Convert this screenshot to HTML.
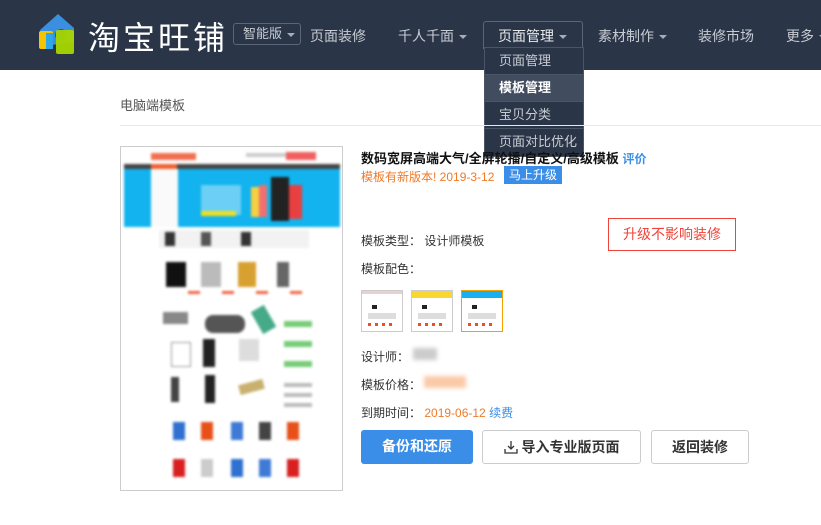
<!DOCTYPE html>
<html><head><meta charset="utf-8"><style>
*{margin:0;padding:0;box-sizing:border-box}
body{width:821px;height:525px;overflow:hidden;background:#fff;font-family:"Liberation Sans","Noto Sans CJK SC",sans-serif;font-size:12px;color:#333;position:relative}
.hd{position:absolute;left:0;top:0;width:821px;height:70px;background:#2a3547}
.a{position:absolute;white-space:nowrap}
.nav{color:#c8ccd3;font-size:14px;top:26px}
.car{display:inline-block;width:0;height:0;border-left:4px solid transparent;border-right:4px solid transparent;border-top:4px solid #aab;vertical-align:middle;margin-left:5px}
.dd{position:absolute;left:484px;top:47px;width:100px;background:#2a3547;border:1px solid #4a5566}
.dd div{height:27px;line-height:26px;padding-left:14px;color:#c8ccd3;font-size:13px;border-bottom:1px solid #4a5566}
.btn{position:absolute;top:430px;height:34px;line-height:32px;text-align:center;font-size:14px;font-weight:bold;border-radius:3px}
.th{filter:blur(1.2px)}
.th div{position:absolute}
.sw{position:absolute;top:290px;width:42px;height:42px;border:1px solid #ccc;background:#fff}
.sw i{position:absolute;display:block;background:#999}
</style></head><body>
<div class="hd"></div>
<svg class="a" style="left:36px;top:12px" width="45" height="43" viewBox="0 0 45 43">
<path d="M4 18 L22 2 L38 16 L38 30 L8 34 Z" fill="#3a8fe0"/>
<rect x="3" y="19" width="14" height="18" rx="2" fill="#f5c400"/>
<rect x="10" y="21" width="7" height="16" fill="#2ea7e8"/>
<circle cx="25" cy="23" r="6" fill="#1e5a9a"/>
<rect x="20" y="18" width="18" height="24" rx="2" fill="#a8d600" opacity=".95"/>
</svg>
<div class="a" style="left:88px;top:13px;font-size:32px;color:#fff;letter-spacing:3px">淘宝旺铺</div>
<div class="a" style="left:233px;top:23px;width:68px;height:22px;border:1px solid #5b6678;border-radius:3px;color:#c8ccd3;font-size:13px;line-height:20px;padding-left:9px">智能版<span class="car"></span></div>
<div class="a nav" style="left:310px">页面装修</div>
<div class="a nav" style="left:398px">千人千面<span class="car"></span></div>
<div class="a" style="left:483px;top:21px;width:100px;height:28px;border:1px solid #5b6678;border-bottom:none;border-radius:3px 3px 0 0"></div>
<div class="a nav" style="left:498px;color:#e8eaee">页面管理<span class="car"></span></div>
<div class="a nav" style="left:598px">素材制作<span class="car"></span></div>
<div class="a nav" style="left:698px">装修市场</div>
<div class="a nav" style="left:786px">更多<span class="car"></span></div>
<div class="dd"><div>页面管理</div><div style="background:#414c5e;color:#fff;font-weight:bold">模板管理</div><div>宝贝分类</div><div style="border:none">页面对比优化</div></div>
<div class="a" style="left:120px;top:95px;font-size:13px;color:#555">电脑端模板</div>
<div class="a" style="left:120px;top:125px;width:701px;height:1px;background:#e8e8e8"></div>
<div class="a" style="left:120px;top:146px;width:223px;height:345px;border:1px solid #ccc;background:#fff"></div>
<div class="a th" style="left:121px;top:147px;width:221px;height:343px">
<div style="left:30px;top:6px;width:45px;height:7px;background:#f07050"></div>
<div style="left:125px;top:6px;width:45px;height:4px;background:#ccc"></div>
<div style="left:165px;top:5px;width:30px;height:8px;background:#f06060"></div>
<div style="left:3px;top:17px;width:216px;height:5px;background:#444"></div>
<div style="left:30px;top:17px;width:26px;height:5px;background:#f06030"></div>
<div style="left:3px;top:22px;width:216px;height:58px;background:#12b3ee"></div>
<div style="left:30px;top:22px;width:27px;height:58px;background:#fafafa"></div>
<div style="left:80px;top:38px;width:40px;height:30px;background:#6ccff5"></div>
<div style="left:80px;top:64px;width:35px;height:5px;background:#f0e020"></div>
<div style="left:130px;top:40px;width:8px;height:30px;background:#f6d040"></div>
<div style="left:138px;top:38px;width:8px;height:32px;background:#f07070"></div>
<div style="left:150px;top:30px;width:18px;height:44px;background:#222"></div>
<div style="left:168px;top:38px;width:13px;height:34px;background:#e84040"></div>
<div style="left:38px;top:83px;width:150px;height:18px;background:#f2f2f2"></div>
<div style="left:44px;top:85px;width:10px;height:14px;background:#333"></div>
<div style="left:80px;top:85px;width:10px;height:14px;background:#555"></div>
<div style="left:120px;top:85px;width:10px;height:14px;background:#333"></div>
<div style="left:45px;top:115px;width:20px;height:25px;background:#111"></div>
<div style="left:80px;top:115px;width:20px;height:25px;background:#bbb"></div>
<div style="left:117px;top:115px;width:18px;height:25px;background:#d8a030"></div>
<div style="left:156px;top:115px;width:12px;height:25px;background:#666"></div>
<div style="left:45px;top:144px;width:140px;height:3px;background:repeating-linear-gradient(90deg,#fff 0 22px,#f06040 22px 34px)"></div>
<div style="left:42px;top:165px;width:25px;height:12px;background:#888"></div>
<div style="left:84px;top:168px;width:40px;height:18px;background:#555;border-radius:8px"></div>
<div style="left:135px;top:160px;width:15px;height:25px;background:#4a8;transform:rotate(-30deg)"></div>
<div style="left:163px;top:168px;width:28px;height:60px;background:repeating-linear-gradient(180deg,#fff 0 6px,#7c7 6px 12px,#fff 12px 20px)"></div>
<div style="left:50px;top:195px;width:20px;height:25px;border:1px solid #999"></div>
<div style="left:82px;top:192px;width:12px;height:28px;background:#222"></div>
<div style="left:118px;top:192px;width:20px;height:22px;background:#ddd"></div>
<div style="left:50px;top:230px;width:8px;height:25px;background:#444"></div>
<div style="left:84px;top:228px;width:10px;height:28px;background:#222"></div>
<div style="left:118px;top:235px;width:25px;height:10px;background:#c9b070;transform:rotate(-15deg)"></div>
<div style="left:163px;top:230px;width:28px;height:30px;background:repeating-linear-gradient(180deg,#fff 0 6px,#bbb 6px 10px)"></div>
<div style="left:52px;top:275px;width:12px;height:18px;background:#3070d0"></div>
<div style="left:80px;top:275px;width:12px;height:18px;background:#e8501a"></div>
<div style="left:110px;top:275px;width:12px;height:18px;background:#3f7ad6"></div>
<div style="left:138px;top:275px;width:12px;height:18px;background:#444"></div>
<div style="left:166px;top:275px;width:12px;height:18px;background:#e8501a"></div>
<div style="left:52px;top:312px;width:12px;height:18px;background:#d82020"></div>
<div style="left:80px;top:312px;width:12px;height:18px;background:#ccc"></div>
<div style="left:110px;top:312px;width:12px;height:18px;background:#3070d0"></div>
<div style="left:138px;top:312px;width:12px;height:18px;background:#3f7ad6"></div>
<div style="left:166px;top:312px;width:12px;height:18px;background:#d82020"></div>
</div>
<div class="a" style="left:361px;top:148px;font-size:13px;font-weight:bold;color:#111">数码宽屏高端大气/全屏轮播/自定义/高级模板 <span style="color:#3b8ee8;font-size:12px">评价</span></div>
<div class="a" style="left:361px;top:168px;font-size:12px;color:#f07a28">模板有新版本! 2019-3-12</div>
<div class="a" style="left:504px;top:166px;width:58px;height:18px;background:#3b8ee8;color:#fff;font-size:12px;line-height:18px;text-align:center">马上升级</div>
<div class="a" style="left:608px;top:218px;width:128px;height:33px;border:1px solid #f0443a;color:#f0443a;font-size:14px;line-height:31px;text-align:center">升级不影响装修</div>
<div class="a" style="left:361px;top:232px">模板类型：  设计师模板</div>
<div class="a" style="left:361px;top:260px">模板配色：</div>
<div class="sw" style="left:361px"><i style="left:0;top:0;width:40px;height:3px;background:#e8d0d0"></i><i style="left:10px;top:14px;width:5px;height:4px;background:#222"></i><i style="left:6px;top:22px;width:28px;height:6px;background:#ddd"></i><i style="left:6px;top:32px;width:28px;height:3px;background:repeating-linear-gradient(90deg,#e85020 0 3px,#fff 3px 7px)"></i></div>
<div class="sw" style="left:411px"><i style="left:0;top:0;width:40px;height:7px;background:#f8d830"></i><i style="left:10px;top:14px;width:5px;height:4px;background:#222"></i><i style="left:6px;top:22px;width:28px;height:6px;background:#ddd"></i><i style="left:6px;top:32px;width:28px;height:3px;background:repeating-linear-gradient(90deg,#e85020 0 3px,#fff 3px 7px)"></i></div>
<div class="sw" style="left:461px;border-color:#f5a000"><i style="left:0;top:0;width:40px;height:7px;background:#18b0ee"></i><i style="left:10px;top:14px;width:5px;height:4px;background:#222"></i><i style="left:6px;top:22px;width:28px;height:6px;background:#ddd"></i><i style="left:6px;top:32px;width:28px;height:3px;background:repeating-linear-gradient(90deg,#e85020 0 3px,#fff 3px 7px)"></i></div>
<div class="a" style="left:361px;top:348px">设计师：</div>
<div class="a" style="left:413px;top:348px;width:24px;height:12px;background:#ccc;filter:blur(2px)"></div>
<div class="a" style="left:361px;top:376px">模板价格：</div>
<div class="a" style="left:424px;top:376px;width:42px;height:12px;background:#fbc9a8;filter:blur(2px)"></div>
<div class="a" style="left:361px;top:404px">到期时间：  <span style="color:#f07a28">2019-06-12</span> <span style="color:#3b8ee8">续费</span></div>
<div class="btn" style="left:361px;width:112px;background:#3b8ee8;color:#fff">备份和还原</div>
<div class="btn" style="left:482px;width:159px;border:1px solid #ccc;color:#333;font-weight:bold">
<svg width="14" height="14" viewBox="0 0 14 14" style="vertical-align:-2px;margin-right:4px"><path d="M7 1v8M4 6l3 3 3-3M1 9v4h12V9" fill="none" stroke="#333" stroke-width="1.3"/></svg>导入专业版页面</div>
<div class="btn" style="left:651px;width:98px;border:1px solid #ccc;color:#333">返回装修</div>
</body></html>
